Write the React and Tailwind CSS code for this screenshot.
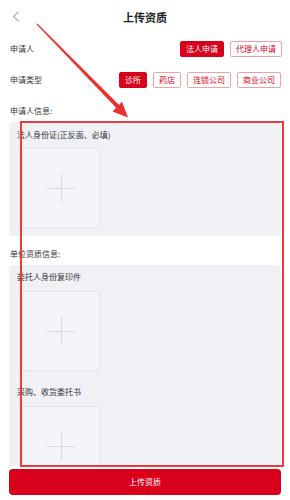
const RED = 'bg-[#d9001b]';

function Chip({ label, active }) {
  return (
    <span
      className={
        active
          ? 'h-[16px] px-[5px] flex items-center rounded-[2px] border border-[#d9001b] bg-[#d9001b] text-white text-[8px] leading-none'
          : 'h-[16px] px-[5px] flex items-center rounded-[2px] border border-[#eea0a8] bg-white text-[#d9001b] text-[8px] leading-none'
      }
    >
      {label}
    </span>
  );
}

function UploadBox({ className = '' }) {
  return (
    <div className={`ml-[5px] w-[78px] h-[80px] rounded-[3px] border border-[#e2e4e8] bg-[#f4f5f8] flex items-center justify-center ${className}`}>
      <svg width="30" height="30" viewBox="0 0 30 30">
        <path d="M1 15.5H29M15.5 1V29" stroke="#d6d8dc" strokeWidth="1" fill="none" />
      </svg>
    </div>
  );
}

export default function App() {
  return (
    <div
      className="relative w-[290px] h-[500px] bg-white flex flex-col overflow-hidden text-[#333]"
      style={{ fontFamily: '"Noto Sans CJK SC", "Noto Sans", sans-serif' }}
    >
      <div className="flex-1 overflow-hidden">
        <div className="relative h-[34px] flex items-center justify-center">
          <svg className="absolute left-[12px] top-[11px]" width="8" height="11" viewBox="0 0 8 11">
            <path d="M6.5 0.8L1.5 5.5L6.5 10.2" stroke="#a8a8a8" strokeWidth="1.1" fill="none" />
          </svg>
          <h1 className="text-[11px] font-bold text-[#222]">上传资质</h1>
        </div>

        <div className="mt-[7px] pl-[10px] pr-[8px] flex items-center justify-between">
          <span className="text-[8px]">申请人</span>
          <div className="flex gap-[6px]">
            <Chip label="法人申请" active />
            <Chip label="代理人申请" />
          </div>
        </div>

        <div className="mt-[15px] pl-[10px] pr-[9px] flex items-center justify-between">
          <span className="text-[8px]">申请类型</span>
          <div className="flex gap-[6px]">
            <Chip label="诊所" active />
            <Chip label="药店" />
            <Chip label="连锁公司" />
            <Chip label="商业公司" />
          </div>
        </div>

        <p className="mt-[17px] pl-[10px] text-[8px] leading-[12px]">申请人信息:</p>
        <div className="mt-[5px] mx-[9px] rounded-[4px] bg-[#f0f1f5] px-[8px] pt-[7px] pb-[8px]">
          <p className="text-[8px] leading-[12px]">法人身份证(正反面、必填)</p>
          <UploadBox className="mt-[7px]" />
        </div>

        <p className="mt-[12px] pl-[10px] text-[8px] leading-[12px]">单位资质信息:</p>
        <div className="mt-[5px] mx-[9px] rounded-[4px] bg-[#f0f1f5] px-[8px] pt-[6px] pb-[8px]">
          <p className="text-[8px] leading-[12px]">委托人身份复印件</p>
          <UploadBox className="mt-[8px]" />
          <p className="mt-[15px] text-[8px] leading-[12px]">采购、收货委托书</p>
          <UploadBox className="mt-[8px]" />
        </div>
      </div>

      <div className="h-[34px] bg-white px-[9px] pt-[3px]">
        <button className={`w-full h-[26px] rounded-[4px] ${RED} text-white text-[8px] flex items-center justify-center`}>
          上传资质
        </button>
      </div>

      <div className="absolute left-[20px] top-[121px] w-[264px] h-[346px] border-2 border-[#ea3b3f] pointer-events-none" />

      <svg className="absolute left-0 top-0 pointer-events-none" width="290" height="140" viewBox="0 0 290 140">
        <polygon points="36.6,24.4 37.4,23.6 119.6,105.6 116.8,108.4" fill="#ec2f2f" />
        <polygon points="128,117.5 112.5,111.5 122,101.8" fill="#ec2f2f" />
      </svg>
    </div>
  );
}
